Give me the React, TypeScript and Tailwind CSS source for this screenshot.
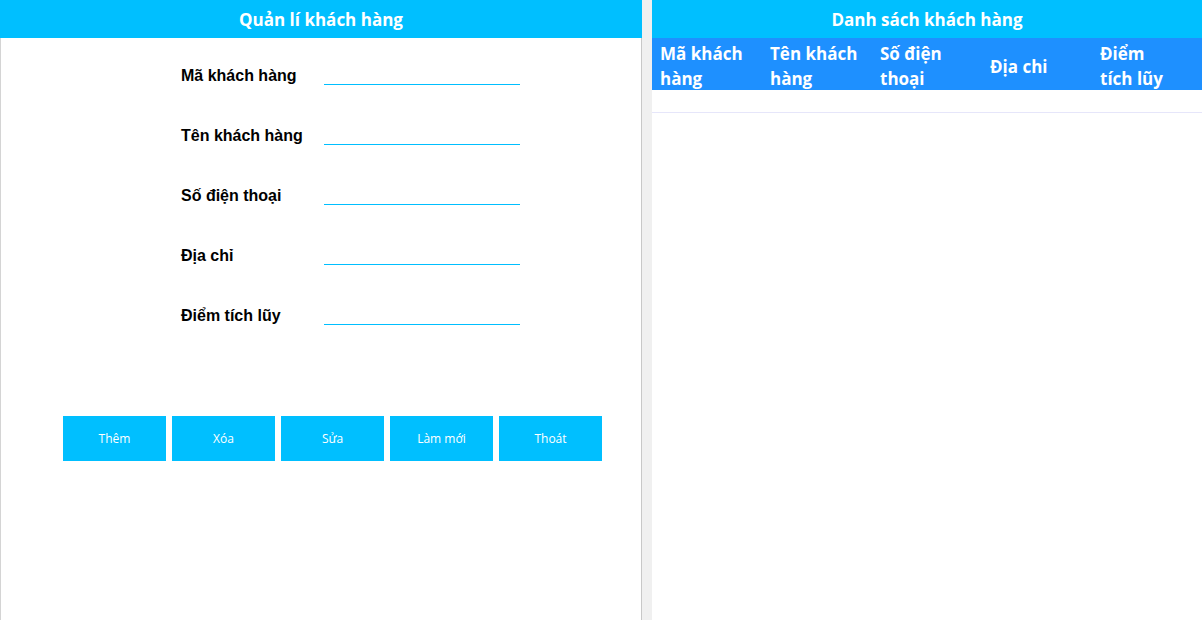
import React from "react";

const fields = ["Mã khách hàng", "Tên khách hàng", "Số điện thoại", "Địa chỉ", "Điểm tích lũy"];
const buttons = ["Thêm", "Xóa", "Sửa", "Làm mới", "Thoát"];
const columns = [
  ["Mã khách", "hàng"],
  ["Tên khách", "hàng"],
  ["Số điện", "thoại"],
  ["Địa chi"],
  ["Điểm", "tích lũy"],
];

export default function App() {
  return (
    <div className="flex h-screen w-full bg-[#f0f0f0] overflow-hidden">
      {/* Form panel */}
      <div className="flex flex-col w-[642px] bg-white">
        <div className="h-[38px] pt-[2px] bg-[#00bfff] flex items-center justify-center text-white font-bold text-[17px] font-['Open_Sans',sans-serif]">
          Quản lí khách hàng
        </div>
        <div className="flex-1 border-l border-r border-l-[#d4d4d4] border-r-[#c8c8c8] font-['Liberation_Sans',Arial,sans-serif]">
          <div className="flex flex-col gap-[36px] pt-[23px] pl-[180px]">
            {fields.map((f) => (
              <div key={f} className="flex items-center h-[24px]">
                <label className="w-[143px] pt-[5px] text-[16px] font-bold text-black">{f}</label>
                <input className="w-[196px] h-[24px] border-b border-[#00bfff] outline-none text-sm" />
              </div>
            ))}
          </div>
          <div className="flex gap-[6px] pl-[62px] mt-[91px]">
            {buttons.map((b) => (
              <button
                key={b}
                className="w-[103px] h-[45px] bg-[#00bfff] text-white text-[12px] font-['Open_Sans',sans-serif]"
              >
                {b}
              </button>
            ))}
          </div>
        </div>
      </div>

      {/* List panel */}
      <div className="flex flex-col flex-1 ml-[10px] bg-white">
        <div className="h-[38px] pt-[2px] bg-[#00bfff] flex items-center justify-center text-white font-bold text-[17px] font-['Open_Sans',sans-serif]">
          Danh sách khách hàng
        </div>
        <div className="grid grid-cols-5 h-[52px] pt-[3px] bg-[#1e90ff] text-white font-bold text-[17px] leading-[25px] font-['Open_Sans',sans-serif]">
          {columns.map((c) => (
            <div key={c[0]} className="flex flex-col justify-center pl-[8px]">
              {c.map((line) => (
                <span key={line}>{line}</span>
              ))}
            </div>
          ))}
        </div>
        <div className="h-[23px] border-b border-[#e6e6fa]" />
      </div>
    </div>
  );
}
